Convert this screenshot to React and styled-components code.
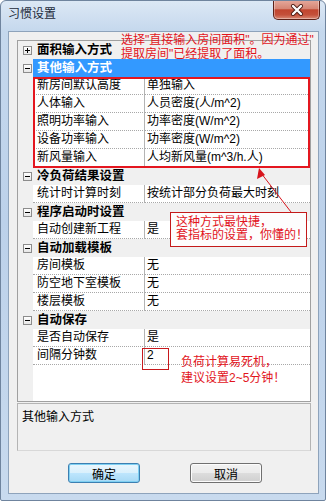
import React from 'react';
import styled, { createGlobalStyle, css } from 'styled-components';

const GlobalStyle = createGlobalStyle`
  html, body {
    margin: 0;
    padding: 0;
    background: #ffffff;
  }
  body {
    font-family: "Liberation Sans", "Noto Sans CJK SC", sans-serif;
    font-size: 12px;
    color: #000000;
  }
`;

const sections = [
  { title: '面积输入方式', collapsed: true, rows: [] },
  {
    title: '其他输入方式',
    selected: true,
    rows: [
      ['新房间默认高度', '单独输入'],
      ['人体输入', '人员密度(人/m^2)'],
      ['照明功率输入', '功率密度(W/m^2)'],
      ['设备功率输入', '功率密度(W/m^2)'],
      ['新风量输入', '人均新风量(m^3/h.人)']
    ]
  },
  { title: '冷负荷结果设置', rows: [['统计时计算时刻', '按统计部分负荷最大时刻']] },
  { title: '程序启动时设置', rows: [['自动创建新工程', '是']] },
  {
    title: '自动加载模板',
    rows: [
      ['房间模板', '无'],
      ['防空地下室模板', '无'],
      ['楼层模板', '无']
    ]
  },
  {
    title: '自动保存',
    rows: [
      ['是否自动保存', '是'],
      ['间隔分钟数', '2']
    ]
  }
];

const Window = styled.div`
  position: relative;
  box-sizing: border-box;
  width: 326px;
  height: 501px;
  display: flex;
  flex-direction: column;
  padding: 0 6px 6px 7px;
  border: 1px solid #6f849e;
  border-radius: 6px 6px 2px 2px;
  background: linear-gradient(to bottom, #dce8f5 0px, #c5d8ed 30px, #bcd1ea 220px, #c8daee 100%);
  overflow: hidden;
`;

const TitleBar = styled.div`
  flex: none;
  height: 30px;
  display: flex;
  align-items: flex-start;
  justify-content: space-between;
`;

const Title = styled.span`
  margin-top: 5px;
  line-height: 16px;
  color: #1c2a3a;
`;

const CloseButton = styled.div`
  box-sizing: border-box;
  width: 47px;
  height: 20px;
  margin: -1px -1px 0 0;
  display: flex;
  align-items: center;
  justify-content: center;
  border: 1px solid #5c2118;
  border-top: none;
  border-radius: 0 0 5px 5px;
  background: linear-gradient(to bottom, #e6aa9d 0%, #d68675 45%, #c1452f 52%, #c4503a 78%, #d98a76 100%);
  box-shadow: inset 0 0 0 1px rgba(255, 255, 255, 0.35);
`;

const Client = styled.div`
  flex: 1;
  box-sizing: border-box;
  display: flex;
  flex-direction: column;
  padding: 8px 7px 0 8px;
  border: 1px solid #8ea3bb;
  background: #f0f0f0;
`;

const Grid = styled.div`
  flex: none;
  box-sizing: border-box;
  height: 362px;
  display: flex;
  flex-direction: column;
  border: 1px solid #a0a0a0;
  background: linear-gradient(to right, #f0f0f0 15px, #ffffff 15px);
`;

const CategoryRow = styled.div`
  display: flex;
  height: 18px;
  background: #f0f0f0;
`;

const Gutter = styled.div`
  flex: none;
  width: 15px;
  display: flex;
  align-items: center;
  padding-left: 5px;
  box-sizing: border-box;
`;

const Toggle = styled.span`
  position: relative;
  box-sizing: border-box;
  width: 9px;
  height: 9px;
  border: 1px solid #8c8c8c;
  background: linear-gradient(to bottom, #ffffff, #e6e6e6);

  &::before {
    content: '';
    position: absolute;
    left: 1px;
    top: 3px;
    width: 5px;
    height: 1px;
    background: #000000;
  }

  ${({ collapsed }) => collapsed && css`
    &::after {
      content: '';
      position: absolute;
      left: 3px;
      top: 1px;
      width: 1px;
      height: 5px;
      background: #000000;
    }
  `}
`;

const CategoryLabel = styled.div`
  flex: 1;
  padding-left: 4px;
  line-height: 18px;
  font-weight: 700;
  font-size: 12.5px;
  color: ${({ selected }) => (selected ? '#ffffff' : '#000000')};
  background: ${({ selected }) => (selected ? '#3399ff' : 'transparent')};
`;

const DataRow = styled.div`
  display: flex;
  height: 18px;
`;

const Cell = styled.div`
  box-sizing: border-box;
  height: 18px;
  line-height: 17px;
  white-space: nowrap;
  border-bottom: 1px dotted #a8a8a8;
`;

const NameCell = styled(Cell)`
  flex: none;
  width: 112px;
  padding-left: 4px;
  border-right: 1px solid #b4b4b4;
`;

const ValueCell = styled(Cell)`
  flex: 1;
  padding-left: 2px;
`;

const HelpPane = styled.div`
  flex: none;
  box-sizing: border-box;
  height: 48px;
  margin-top: 1px;
  padding: 5px 4px;
  border: 1px solid #b4b4b4;
  border-bottom-color: #d8d8d8;
  line-height: 16px;
`;

const ButtonRow = styled.div`
  display: flex;
  gap: 50px;
  margin-top: 12px;
  padding-left: 51px;
`;

const Button = styled.button`
  box-sizing: border-box;
  width: 72px;
  height: 20px;
  padding: 0;
  font: inherit;
  font-size: 12px;
  color: #000000;
  border-radius: 3px;
  border: 1px solid ${({ primary }) => (primary ? '#3c7fb1' : '#707070')};
  background: ${({ primary }) => (primary
    ? 'linear-gradient(to bottom, #eaf6fd 0%, #d9f0fc 50%, #bee6fd 50%, #a7d9f5 100%)'
    : 'linear-gradient(to bottom, #f2f2f2 0%, #ebebeb 50%, #dddddd 50%, #cfcfcf 100%)')};
  box-shadow: inset 0 0 0 1px ${({ primary }) => (primary ? '#7fd0f2' : '#fcfcfc')};
`;

const Note = styled.div`
  position: absolute;
  left: ${({ x }) => x}px;
  top: ${({ y }) => y}px;
  color: #e2141c;
  font-size: 12px;
  line-height: ${({ lh }) => lh || 14}px;
  white-space: nowrap;
  pointer-events: none;
`;

const NoteBox = styled(Note)`
  box-sizing: border-box;
  width: 137px;
  height: 35px;
  padding: 3px 0 0 5px;
  border: 1px solid #c41a1a;
  background: #fdfdfd;
`;

const Frame = styled.div`
  position: absolute;
  box-sizing: border-box;
  left: ${({ x }) => x}px;
  top: ${({ y }) => y}px;
  width: ${({ w }) => w}px;
  height: ${({ h }) => h}px;
  border: ${({ thick }) => (thick ? '2px solid #e4161f' : '1px solid #c8181c')};
  pointer-events: none;
`;

const ArrowLayer = styled.svg`
  position: absolute;
  left: 0;
  top: 0;
  pointer-events: none;
`;

function CloseGlyph () {
  return (
    <svg width='14' height='12' viewBox='0 0 14 12'>
      <path d='M3 2 L11 10 M11 2 L3 10' stroke='#4a1a12' strokeWidth='4' strokeLinecap='round' />
      <path d='M3 2 L11 10 M11 2 L3 10' stroke='#ffffff' strokeWidth='2.4' strokeLinecap='round' />
    </svg>
  );
}

function Category ({ section }) {
  return (
    <>
      <CategoryRow>
        <Gutter>
          <Toggle collapsed={section.collapsed} />
        </Gutter>
        <CategoryLabel selected={section.selected}>{section.title}</CategoryLabel>
      </CategoryRow>
      {section.rows.map(([name, value]) => (
        <DataRow key={name}>
          <Gutter />
          <NameCell>{name}</NameCell>
          <ValueCell>{value}</ValueCell>
        </DataRow>
      ))}
    </>
  );
}

export default function App () {
  return (
    <>
      <GlobalStyle />
      <Window>
        <TitleBar>
          <Title>习惯设置</Title>
          <CloseButton>
            <CloseGlyph />
          </CloseButton>
        </TitleBar>
        <Client>
          <Grid>
            {sections.map((s) => (
              <Category key={s.title} section={s} />
            ))}
          </Grid>
          <HelpPane>其他输入方式</HelpPane>
          <ButtonRow>
            <Button primary>确定</Button>
            <Button>取消</Button>
          </ButtonRow>
        </Client>

        <Note x={120} y={32}>
          选择"直接输入房间面积"。因为通过"
          <br />
          提取房间"已经提取了面积。
        </Note>
        <Frame thick x={32} y={76} w={277} h={91} />
        <ArrowLayer width='326' height='501'>
          <line x1='290' y1='211' x2='260' y2='172' stroke='#d8141c' strokeWidth='1' />
          <polygon points='258,167 256,178 264,174' fill='#d8141c' />
        </ArrowLayer>
        <NoteBox x={169} y={211} lh={13}>
          这种方式最快捷，
          <br />
          套指标的设置，你懂的！
        </NoteBox>
        <Frame x={141} y={347} w={27} h={22} />
        <Note x={180} y={353} lh={16}>
          负荷计算易死机，
          <br />
          建议设置2~5分钟！
        </Note>
      </Window>
    </>
  );
}
